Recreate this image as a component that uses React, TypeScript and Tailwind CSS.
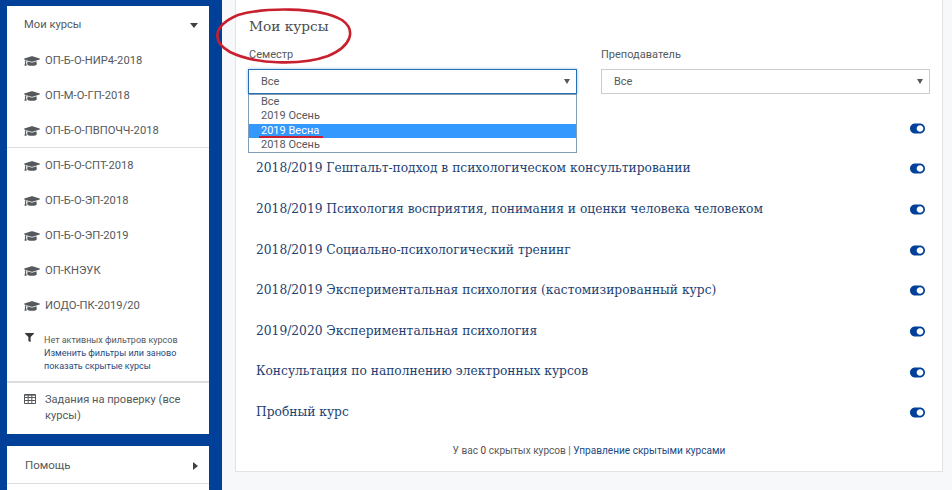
import React from 'react';
import { FaGraduationCap, FaFilter, FaToggleOn } from 'react-icons/fa';

const courses = ['ОП-Б-О-НИР4-2018', 'ОП-М-О-ГП-2018', 'ОП-Б-О-ПВПОЧЧ-2018'];
const courses2 = ['ОП-Б-О-СПТ-2018', 'ОП-Б-О-ЭП-2018', 'ОП-Б-О-ЭП-2019', 'ОП-КНЭУК', 'ИОДО-ПК-2019/20'];

const rows = [
  '',
  '2018/2019 Гештальт-подход в психологическом консультировании',
  '2018/2019 Психология восприятия, понимания и оценки человека человеком',
  '2018/2019 Социально-психологический тренинг',
  '2018/2019 Экспериментальная психология (кастомизированный курс)',
  '2019/2020 Экспериментальная психология',
  'Консультация по наполнению электронных курсов',
  'Пробный курс',
];

const CourseLink = ({ name, lower }: { name: string; lower?: boolean }) => (
  <div className={`flex items-center h-[35px] pl-[17px] text-[11.2px] text-[#55595c] ${lower ? 'pt-[3px]' : 'pt-[1px]'}`}>
    <FaGraduationCap className="w-[16px] h-[16px] mr-[5px] -mt-[1px] text-[#55595c]" />
    <span>{name}</span>
  </div>
);

const SelectBox = ({ focused }: { focused?: boolean }) => (
  <div
    className={`flex items-center justify-between h-[25px] pt-[1px] pl-[12px] pr-[6px] text-[11px] text-[#55595c] bg-white border ${
      focused ? 'border-[#2a6fb5] shadow-[0_0_3px_#8fc0ee]' : 'border-[#ccc]'
    }`}
  >
    <span>Все</span>
    <svg width="6" height="5" viewBox="0 0 6 5" className="text-[#55595c] -mt-[1px]">
      <path d="M0 0h6L3 5z" fill="currentColor" />
    </svg>
  </div>
);

export default function App() {
  return (
    <div className="relative flex w-[952px] h-[490px] overflow-hidden bg-[#f7f8f9] font-['Roboto',sans-serif]">
      {/* sidebar */}
      <aside className="w-[222px] shrink-0 bg-[#004098] pt-[6px] pl-[7px] pr-[13px]">
        <div className="bg-white h-[428px]">
          <div className="flex items-center justify-between h-[36px] pt-[2px] pl-[17px] pr-[11px] text-[11.2px] text-[#55595c]">
            <span>Мои курсы</span>
            <svg width="8" height="5" viewBox="0 0 8 5" className="text-[#3f4245]">
              <path d="M0 0h8L4 5z" fill="currentColor" />
            </svg>
          </div>
          {courses.map((c) => (
            <CourseLink key={c} name={c} lower />
          ))}
          <div className="border-t border-[#ddd]">
            {courses2.map((c) => (
              <CourseLink key={c} name={c} />
            ))}
          </div>
          <div className="flex pl-[18px] pt-[11px] h-[58px] text-[9px] leading-[13px]">
            <FaFilter className="w-[9px] h-[9px] -mt-[1px] mr-[10px] text-[#373a3c] shrink-0" />
            <div className="text-[#55595c]">
              Нет активных фильтров курсов
              <br />
              <span className="text-[#1d4a82]">
                Изменить фильтры или заново
                <br />
                показать скрытые курсы
              </span>
            </div>
          </div>
          <div className="flex border-t-2 border-[#ddd] pl-[17px] pt-[9px] text-[11.1px] leading-[16px] text-[#55595c]">
            <svg width="12" height="10" viewBox="0 0 12 10" className="mt-[2px] mr-[9px] shrink-0 text-[#55595c]" fill="none" stroke="currentColor">
              <path d="M.5.5h11v9H.5zM.5 3.5h11M.5 6.5h11M4.2 .5v9M7.8 .5v9" />
              <path d="M.5 1.2h11" />
            </svg>
            <span className="w-[145px]">Задания на проверку (все курсы)</span>
          </div>
        </div>
        <div className="bg-white h-[60px] mt-[12px]">
          <div className="flex items-center justify-between h-[38px] pt-[2px] pl-[18px] pr-[11px] border-b border-[#ddd] text-[11.5px] text-[#55595c]">
            <span>Помощь</span>
            <svg width="5" height="8" viewBox="0 0 5 8" className="text-[#3f4245]">
              <path d="M0 0v8l5-4z" fill="currentColor" />
            </svg>
          </div>
        </div>
      </aside>

      {/* main card */}
      <main className="w-[730px] pl-[13px] pr-[9px]">
        <div className="relative h-[472px] bg-white border border-t-0 border-[#e3e3e3] px-[12px]">
          <h1 className="pt-[17px] pl-[1px] h-[46px] text-[13.7px] leading-[18px] text-[#4a4d50] font-['DejaVu_Serif',serif]">Мои курсы</h1>
          <div className="grid grid-cols-2 gap-[24px] text-[11px] text-[#55595c]">
            <div className="relative">
              <div className="h-[23px] pt-[1px] pl-[1px]">Семестр</div>
              <SelectBox focused />
              <div className="absolute z-10 left-0 right-0 top-[48px] h-[59px] bg-white border border-[#7f9db9] text-[11px] leading-[14.3px]">
                <div className="pl-[12px]">Все</div>
                <div className="pl-[12px]">2019 Осень</div>
                <div className="pl-[12px] bg-[#3399ff] text-white">2019 Весна</div>
                <div className="pl-[12px]">2018 Осень</div>
              </div>
            </div>
            <div>
              <div className="h-[23px] pt-[1px]">Преподаватель</div>
              <SelectBox />
            </div>
          </div>
          <div className="mt-[14px]">
            {rows.map((r, i) => (
              <div key={i} className="flex items-center justify-between h-[40.65px] pl-[8px] pr-[5px] text-[#1d3f72] text-[12.25px] font-['DejaVu_Serif',serif]">
                <span className="-mt-[1px]">{r}</span>
                <FaToggleOn className="w-[15px] h-[15px] text-[#004098]" />
              </div>
            ))}
          </div>
          <div className="mt-[10px] text-center text-[10.1px] text-[#55595c]">
            У вас <span className="text-[#7a2b2b]">0</span> скрытых курсов | <span className="text-[#1d4a82]">Управление скрытыми курсами</span>
          </div>
        </div>
      </main>

      {/* red pen marks over the screenshot */}
      <svg className="absolute left-0 top-0 pointer-events-none z-20" width="952" height="490" viewBox="0 0 952 490" fill="none">
        <path d="M238 15 C262 8 318 6 342 20 C356 30 352 46 328 56 C300 66 254 64 230 52 C212 42 212 26 238 15 Z" stroke="#c8202f" strokeWidth="2.6" />
        <path d="M259 137 H323" stroke="#c8202f" strokeWidth="2" />
      </svg>
    </div>
  );
}
